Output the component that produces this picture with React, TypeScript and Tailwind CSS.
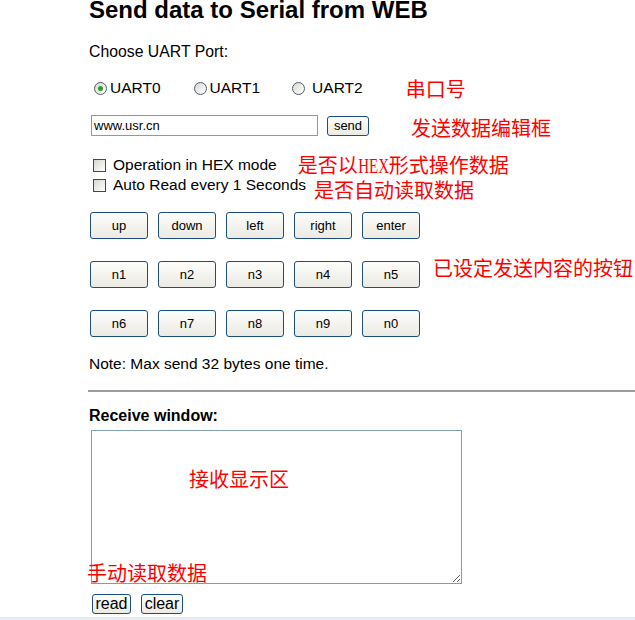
import React from 'react';

const sans = { fontFamily: '"Liberation Sans", Arial, sans-serif' };

const XpButton: React.FC<{ label: string; className?: string }> = ({ label, className = '' }) => (
  <button
    type="button"
    className={`flex items-center justify-center rounded-[3px] border border-[#1c4f7e] bg-linear-to-b from-[#fdfdfb] to-[#ebeae3] text-black ${className}`}
  >
    {label}
  </button>
);

const Radio: React.FC<{ checked?: boolean }> = ({ checked }) => (
  <span className="flex h-[13px] w-[13px] shrink-0 items-center justify-center rounded-full border border-[#55606b] bg-linear-to-br from-[#d8d8d2] to-white">
    {checked && <span className="h-[5px] w-[5px] rounded-full bg-[#2aa12a]" />}
  </span>
);

const Checkbox: React.FC = () => (
  <span className="block h-[13px] w-[13px] shrink-0 border border-[#1c5180] bg-linear-to-br from-[#d6d6d0] to-white" />
);

const Note: React.FC<{ children: React.ReactNode; className?: string }> = ({ children, className = '' }) => (
  <span
    className={`whitespace-nowrap text-[20px] leading-[20px] text-[#ff0000] ${className}`}
    style={{ fontFamily: '"Noto Sans CJK SC", sans-serif' }}
  >
    {children}
  </span>
);

const keyRows = [
  ['up', 'down', 'left', 'right', 'enter'],
  ['n1', 'n2', 'n3', 'n4', 'n5'],
  ['n6', 'n7', 'n8', 'n9', 'n0'],
];

export default function App() {
  return (
    <div className="flex h-[620px] w-[635px] flex-col overflow-hidden bg-white text-black" style={sans}>
      <div className="flex flex-col pl-[89px]">
        <h1 className="h-[24px] whitespace-nowrap text-[24px] font-bold leading-[20px]">Send data to Serial from WEB</h1>

        <div className="mt-[19px] h-[18px] text-[15.8px] leading-[18px]">Choose UART Port:</div>

        <div className="mt-[17px] flex h-[20px] items-center text-[15.5px] leading-[20px]">
          <span className="ml-[5px]"><Radio checked /></span>
          <span className="ml-[3px]">UART0</span>
          <span className="ml-[33px]"><Radio /></span>
          <span className="ml-[3px]">UART1</span>
          <span className="ml-[32px]"><Radio /></span>
          <span className="ml-[7px]">UART2</span>
          <Note className="ml-[43px] translate-y-[1px]">串口号</Note>
        </div>

        <div className="mt-[17px] flex h-[21px] items-center">
          <input
            readOnly
            value="www.usr.cn"
            className="ml-[2px] h-[21px] w-[227px] border border-[#7f9db9] px-[2px] text-[13px] outline-none"
          />
          <XpButton label="send" className="ml-[9px] h-[20px] w-[42px] text-[13px]" />
          <Note className="ml-[42px] translate-y-[2px]">发送数据编辑框</Note>
        </div>

        <div className="mt-[19px] flex h-[20px] items-center text-[15.5px] leading-[20px]">
          <span className="ml-[4px]"><Checkbox /></span>
          <span className="ml-[7px]">Operation in HEX mode</span>
          <Note className="ml-[21px]">
            是否以
            <span
              className="-mx-[5px] inline-block scale-x-[0.75]"
              style={{ fontFamily: '"Liberation Serif", serif' }}
            >
              HEX
            </span>
            形式操作数据
          </Note>
        </div>
        <div className="flex h-[20px] items-center text-[15.5px] leading-[20px]">
          <span className="ml-[4px]"><Checkbox /></span>
          <span className="ml-[7px]">Auto Read every 1 Seconds</span>
          <Note className="ml-[8px] translate-y-[5px]">是否自动读取数据</Note>
        </div>

        <div className="mt-[17px] flex flex-col gap-[22px]">
          {keyRows.map((row, i) => (
            <div key={i} className="flex items-center">
              <div className="ml-[1px] flex gap-[10px]">
                {row.map(k => (
                  <XpButton key={k} label={k} className="h-[27px] w-[58px] text-[13px]" />
                ))}
              </div>
              {i === 1 && <Note className="ml-[13px] -translate-y-[7px]">已设定发送内容的按钮</Note>}
            </div>
          ))}
        </div>

        <div className="mt-[18px] h-[18px] text-[15.5px] leading-[18px]">Note: Max send 32 bytes one time.</div>

        <div className="-ml-[1px] mt-[17px] h-[2px] bg-[#9c9c9c]" />

        <div className="mt-[15px] h-[18px] text-[16px] font-bold leading-[18px]">Receive window:</div>

        <div className="relative ml-[2px] mt-[5px] h-[154px] w-[371px]">
          <textarea readOnly className="block h-[154px] w-[371px] border border-[#7f9db9] outline-none" />
          <Note className="absolute left-[98px] top-[39px]">接收显示区</Note>
          <Note className="absolute left-[-4px] top-[133px]">手动读取数据</Note>
        </div>

        <div className="mt-[10px] flex">
          <XpButton label="read" className="ml-[3px] h-[20px] w-[39px] text-[16px]" />
          <XpButton label="clear" className="ml-[10px] h-[20px] w-[42px] text-[16px]" />
        </div>
      </div>
      <div className="mt-auto h-[3px] w-full bg-[#e6ebf1]" />
    </div>
  );
}
